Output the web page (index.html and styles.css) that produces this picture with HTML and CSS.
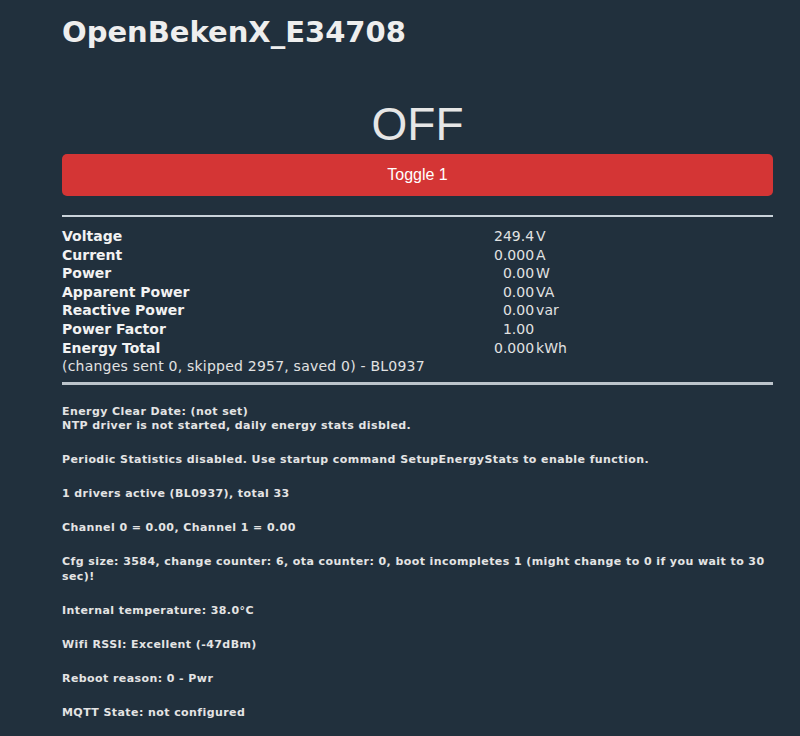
FILE: index.html
```html
<!DOCTYPE html>
<html>
<head>
<meta charset="utf-8">
<title>OpenBekenX_E34708</title>
<link rel="stylesheet" href="styles.css">
</head>
<body>
<main class="page">
  <h1 class="title">OpenBekenX_E34708</h1>
  <div class="state">OFF</div>
  <button class="toggle">Toggle 1</button>
  <hr class="rule rule-top">
  <div class="stats">
    <div class="label">Voltage</div><div class="num">249.4</div><div class="unit">V</div>
    <div class="label">Current</div><div class="num">0.000</div><div class="unit">A</div>
    <div class="label">Power</div><div class="num">0.00</div><div class="unit">W</div>
    <div class="label">Apparent Power</div><div class="num">0.00</div><div class="unit">VA</div>
    <div class="label">Reactive Power</div><div class="num">0.00</div><div class="unit">var</div>
    <div class="label">Power Factor</div><div class="num">1.00</div><div class="unit"></div>
    <div class="label">Energy Total</div><div class="num">0.000</div><div class="unit">kWh</div>
    <div class="note">(changes sent 0, skipped 2957, saved 0) - BL0937</div>
  </div>
  <hr class="rule rule-bottom">
  <section class="info">
    <p>Energy Clear Date: (not set)<br>NTP driver is not started, daily energy stats disbled.</p>
    <p>Periodic Statistics disabled. Use startup command SetupEnergyStats to enable function.</p>
    <p>1 drivers active (BL0937), total 33</p>
    <p>Channel 0 = 0.00, Channel 1 = 0.00</p>
    <p>Cfg size: 3584, change counter: 6, ota counter: 0, boot incompletes 1 (might change to 0 if you wait to 30 sec)!</p>
    <p>Internal temperature: 38.0°C</p>
    <p>Wifi RSSI: Excellent (-47dBm)</p>
    <p>Reboot reason: 0 - Pwr</p>
    <p>MQTT State: not configured</p>
  </section>
</main>
</body>
</html>
```

FILE: styles.css
```css
html, body {
  margin: 0;
  padding: 0;
  background: #21303d;
}
body {
  color: #eaeaea;
  font-family: "DejaVu Sans", Verdana, sans-serif;
}
.page {
  width: 711px;
  margin-left: 62px;
  padding-top: 15px;
}
.title {
  margin: 0;
  font-size: 29px;
  line-height: 34px;
  font-weight: bold;
  color: #eeeeee;
}
.state {
  margin-top: 49px;
  text-align: center;
  font-family: "Liberation Sans", Arial, sans-serif;
  font-size: 46px;
  line-height: 52px;
  color: #e6e6e6;
}
.toggle {
  display: block;
  width: 100%;
  height: 42px;
  margin-top: 4px;
  border: 0;
  border-radius: 5px;
  background: #d43535;
  color: #ffffff;
  font-family: "Liberation Sans", Arial, sans-serif;
  font-size: 16px;
  padding: 0;
}
.rule {
  border: 0;
  margin: 0;
  background: #c9d2da;
}
.rule-top {
  height: 2px;
  margin-top: 19px;
}
.rule-bottom {
  height: 3px;
  margin-top: 6px;
  background: #bcc4cb;
}
.stats {
  display: grid;
  grid-template-columns: 432px max-content 1fr;
  font-size: 14px;
  line-height: 18.6px;
  margin-top: 10px;
}
.label {
  font-weight: bold;
  color: #f2f2f2;
}
.num {
  text-align: right;
  color: #e2e2e2;
}
.unit {
  padding-left: 2px;
  color: #e2e2e2;
}
.note {
  grid-column: 1 / -1;
  color: #e2e2e2;
  letter-spacing: 0.22px;
}
.info {
  margin-top: 20px;
  font-size: 11px;
  line-height: 14.5px;
  font-weight: bold;
  letter-spacing: 0.42px;
  color: #e4e4e4;
}
.info p {
  margin: 0 0 19.5px 0;
}
```
